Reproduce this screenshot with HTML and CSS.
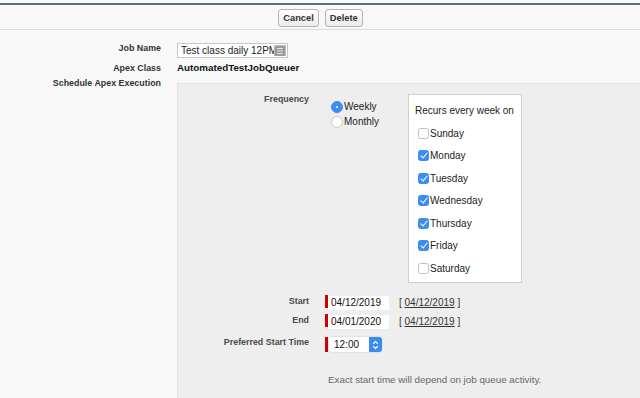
FILE: index.html
```html
<!DOCTYPE html>
<html>
<head>
<meta charset="utf-8">
<link rel="stylesheet" href="styles.css">
</head>
<body>
<div class="header">
  <button class="btn">Cancel</button>
  <button class="btn">Delete</button>
</div>
<div class="form">
  <div class="label r1">Job Name</div>
  <div class="value r1">
    <div class="text-input">
      <span class="ti-text">Test class daily 12PM</span>
      <span class="ti-icon">
        <svg width="10" height="10" viewBox="0 0 10 10"><rect x="0" y="0" width="10" height="10" rx="1" fill="#9a9a9a"/><path d="M2 2.5h6M2 5h6M2 7.5h6" stroke="#e6e6e6" stroke-width="1"/></svg>
      </span>
    </div>
  </div>
  <div class="label r2">Apex Class</div>
  <div class="value r2 strong">AutomatedTestJobQueuer</div>
  <div class="label r3">Schedule Apex Execution</div>
  <div class="value">
    <div class="panel">
      <div class="plabel">Frequency</div>
      <div class="freq">
        <div class="radios">
          <div class="radio-row"><span class="radio on"></span>Weekly</div>
          <div class="radio-row"><span class="radio"></span>Monthly</div>
        </div>
        <div class="daybox">
          <div class="daybox-title">Recurs every week on</div>
          <div class="day"><span class="cb"></span>Sunday</div>
          <div class="day"><span class="cb on"></span>Monday</div>
          <div class="day"><span class="cb on"></span>Tuesday</div>
          <div class="day"><span class="cb on"></span>Wednesday</div>
          <div class="day"><span class="cb on"></span>Thursday</div>
          <div class="day"><span class="cb on"></span>Friday</div>
          <div class="day"><span class="cb"></span>Saturday</div>
        </div>
      </div>
      <div class="plabel drow first">Start</div>
      <div class="dval first"><span class="req"></span><span class="date">04/12/2019</span><span class="today">[ <u>04/12/2019</u> ]</span></div>
      <div class="plabel drow">End</div>
      <div class="dval"><span class="req"></span><span class="date">04/01/2020</span><span class="today">[ <u>04/12/2019</u> ]</span></div>
      <div class="plabel drow pst">Preferred Start Time</div>
      <div class="dval pst"><span class="req tall"></span><span class="select">12:00<span class="stepper"><svg width="7" height="10" viewBox="0 0 7 10"><path d="M1.2 3.8L3.5 1.6L5.8 3.8M1.2 6.2L3.5 8.4L5.8 6.2" fill="none" stroke="#fff" stroke-width="1.2"/></svg></span></span></div>
      <div></div>
      <div class="note">Exact start time will depend on job queue activity.</div>
    </div>
  </div>
</div>
</body>
</html>
```
FILE: styles.css
```css
* { box-sizing: border-box; }
html, body { margin: 0; padding: 0; }
body {
  background: #f8f8f8;
  font-family: "Liberation Sans", Arial, Helvetica, sans-serif;
  color: #222;
  overflow: hidden;
  height: 398px;
}
.header {
  margin-top: 3px;
  border-top: 2px solid #5e6d84;
  height: 27px;
  border-bottom: 1px solid #dcdcdc;
  display: flex;
  justify-content: center;
  align-items: center;
  gap: 6px;
  padding-left: 1px;
}
.btn {
  font-family: "Liberation Sans", Arial, sans-serif;
  font-weight: bold;
  font-size: 9.3px;
  color: #333;
  height: 18px;
  padding: 0 4px;
  border: 1px solid #b5b5b5;
  border-radius: 3px;
  background: linear-gradient(#ffffff, #ececec);
  margin-top: 1px;
}
.form {
  display: grid;
  grid-template-columns: 161px 1fr;
  column-gap: 16px;
  padding-top: 13px;
}
.label {
  text-align: right;
  font-weight: bold;
  font-size: 8.9px;
  color: #333;
}
.r1 { height: 18px; }
.label.r1 { line-height: 10px; }
.r2 { height: 15px; line-height: 14px; }
.label.r3 { line-height: 13px; padding-top: 1px; }
.strong { font-weight: bold; font-size: 9.8px; color: #111; }
.text-input {
  width: 111px;
  height: 15px;
  border: 1px solid #c8c8c8;
  background: #fff;
  position: relative;
  overflow: hidden;
  font-size: 10px;
  line-height: 13px;
  padding-left: 3px;
  white-space: nowrap;
}
.ti-icon {
  position: absolute;
  right: 1px;
  top: 1px;
  width: 12px;
  height: 11px;
  background: #bdbdbd;
  display: flex;
  align-items: center;
  justify-content: center;
}
.ti-icon svg { display: block; }
.panel {
  margin-top: 7px;
  background: #eeeeee;
  border-top: 1px solid #e2e2e2;
  border-left: 1px solid #e2e2e2;
  height: 330px;
  display: grid;
  grid-template-columns: 131px 1fr;
  column-gap: 16px;
  align-content: start;
  padding-top: 9px;
}
.plabel {
  text-align: right;
  font-weight: bold;
  font-size: 8.9px;
  color: #4a4a4a;
  line-height: 12px;
}
.freq { display: flex; }
.radios {
  margin-left: 6px;
  padding-top: 6px;
  width: 77px;
  font-size: 10px;
  color: #222;
}
.radio-row {
  display: flex;
  align-items: center;
  height: 15px;
}
.radio {
  width: 12px;
  height: 12px;
  border-radius: 50%;
  background: #fff;
  border: 1px solid #c9c9c9;
  margin-right: 1px;
  position: relative;
  flex: none;
}
.radio.on {
  background: #3d8ef2;
  border-color: #3d8ef2;
}
.radio.on::after {
  content: "";
  position: absolute;
  left: 4px;
  top: 4px;
  width: 2px;
  height: 2px;
  border-radius: 50%;
  background: #fff;
}
.daybox {
  margin-top: 1px;
  width: 114px;
  height: 189px;
  background: #fff;
  border: 1px solid #cfcfcf;
  padding: 9px 0 0 6px;
  font-size: 10px;
  color: #222;
}
.daybox-title {
  line-height: 14px;
  margin-bottom: 4px;
}
.day {
  height: 22.5px;
  display: flex;
  align-items: center;
}
.cb {
  width: 11px;
  height: 11px;
  border: 1px solid #c2c2c2;
  border-radius: 2.5px;
  background: #fff;
  margin-left: 3px;
  margin-right: 1px;
  flex: none;
  position: relative;
}
.cb.on {
  background: #3b8ef0;
  border-color: #3b8ef0;
}
.cb.on::after {
  content: "";
  position: absolute;
  left: 3px;
  top: 0px;
  width: 3px;
  height: 6px;
  border-right: 1.5px solid #fff;
  border-bottom: 1.5px solid #fff;
  transform: rotate(40deg);
}
.drow { line-height: 14px; height: 19px; }
.first { margin-top: 11px; }
.dval {
  height: 19px;
  display: flex;
  align-items: flex-start;
  padding-top: 1px;
  font-size: 10px;
}
.req {
  width: 3px;
  height: 13px;
  background: #c00;
  flex: none;
}
.req.tall { height: 15px; }
.date {
  margin-top: 1px;
  width: 61px;
  height: 14px;
  background: #fff;
  line-height: 14px;
  padding-left: 3px;
  color: #111;
}
.today {
  margin-left: 10px;
  line-height: 15px;
  color: #333;
}
.today u { text-decoration-color: #333; }
.pst { margin-top: 3px; }
.dval.pst { padding-top: 2px; }
.select {
  margin-left: 1px;
  width: 53px;
  height: 15px;
  background: #fff;
  border-radius: 3px;
  line-height: 15px;
  padding-left: 5px;
  position: relative;
  color: #111;
  box-shadow: 0 0 0 0.5px #d8d8d8;
}
.stepper {
  position: absolute;
  right: 0;
  top: 0;
  width: 13px;
  height: 15px;
  background: #3a8cf0;
  border-radius: 0 3px 3px 0;
  display: flex;
  align-items: center;
  justify-content: center;
}
.stepper svg { display: block; }
.note {
  margin-top: 20px;
  margin-left: 3px;
  font-size: 9.8px;
  line-height: 12px;
  color: #666;
}
```
